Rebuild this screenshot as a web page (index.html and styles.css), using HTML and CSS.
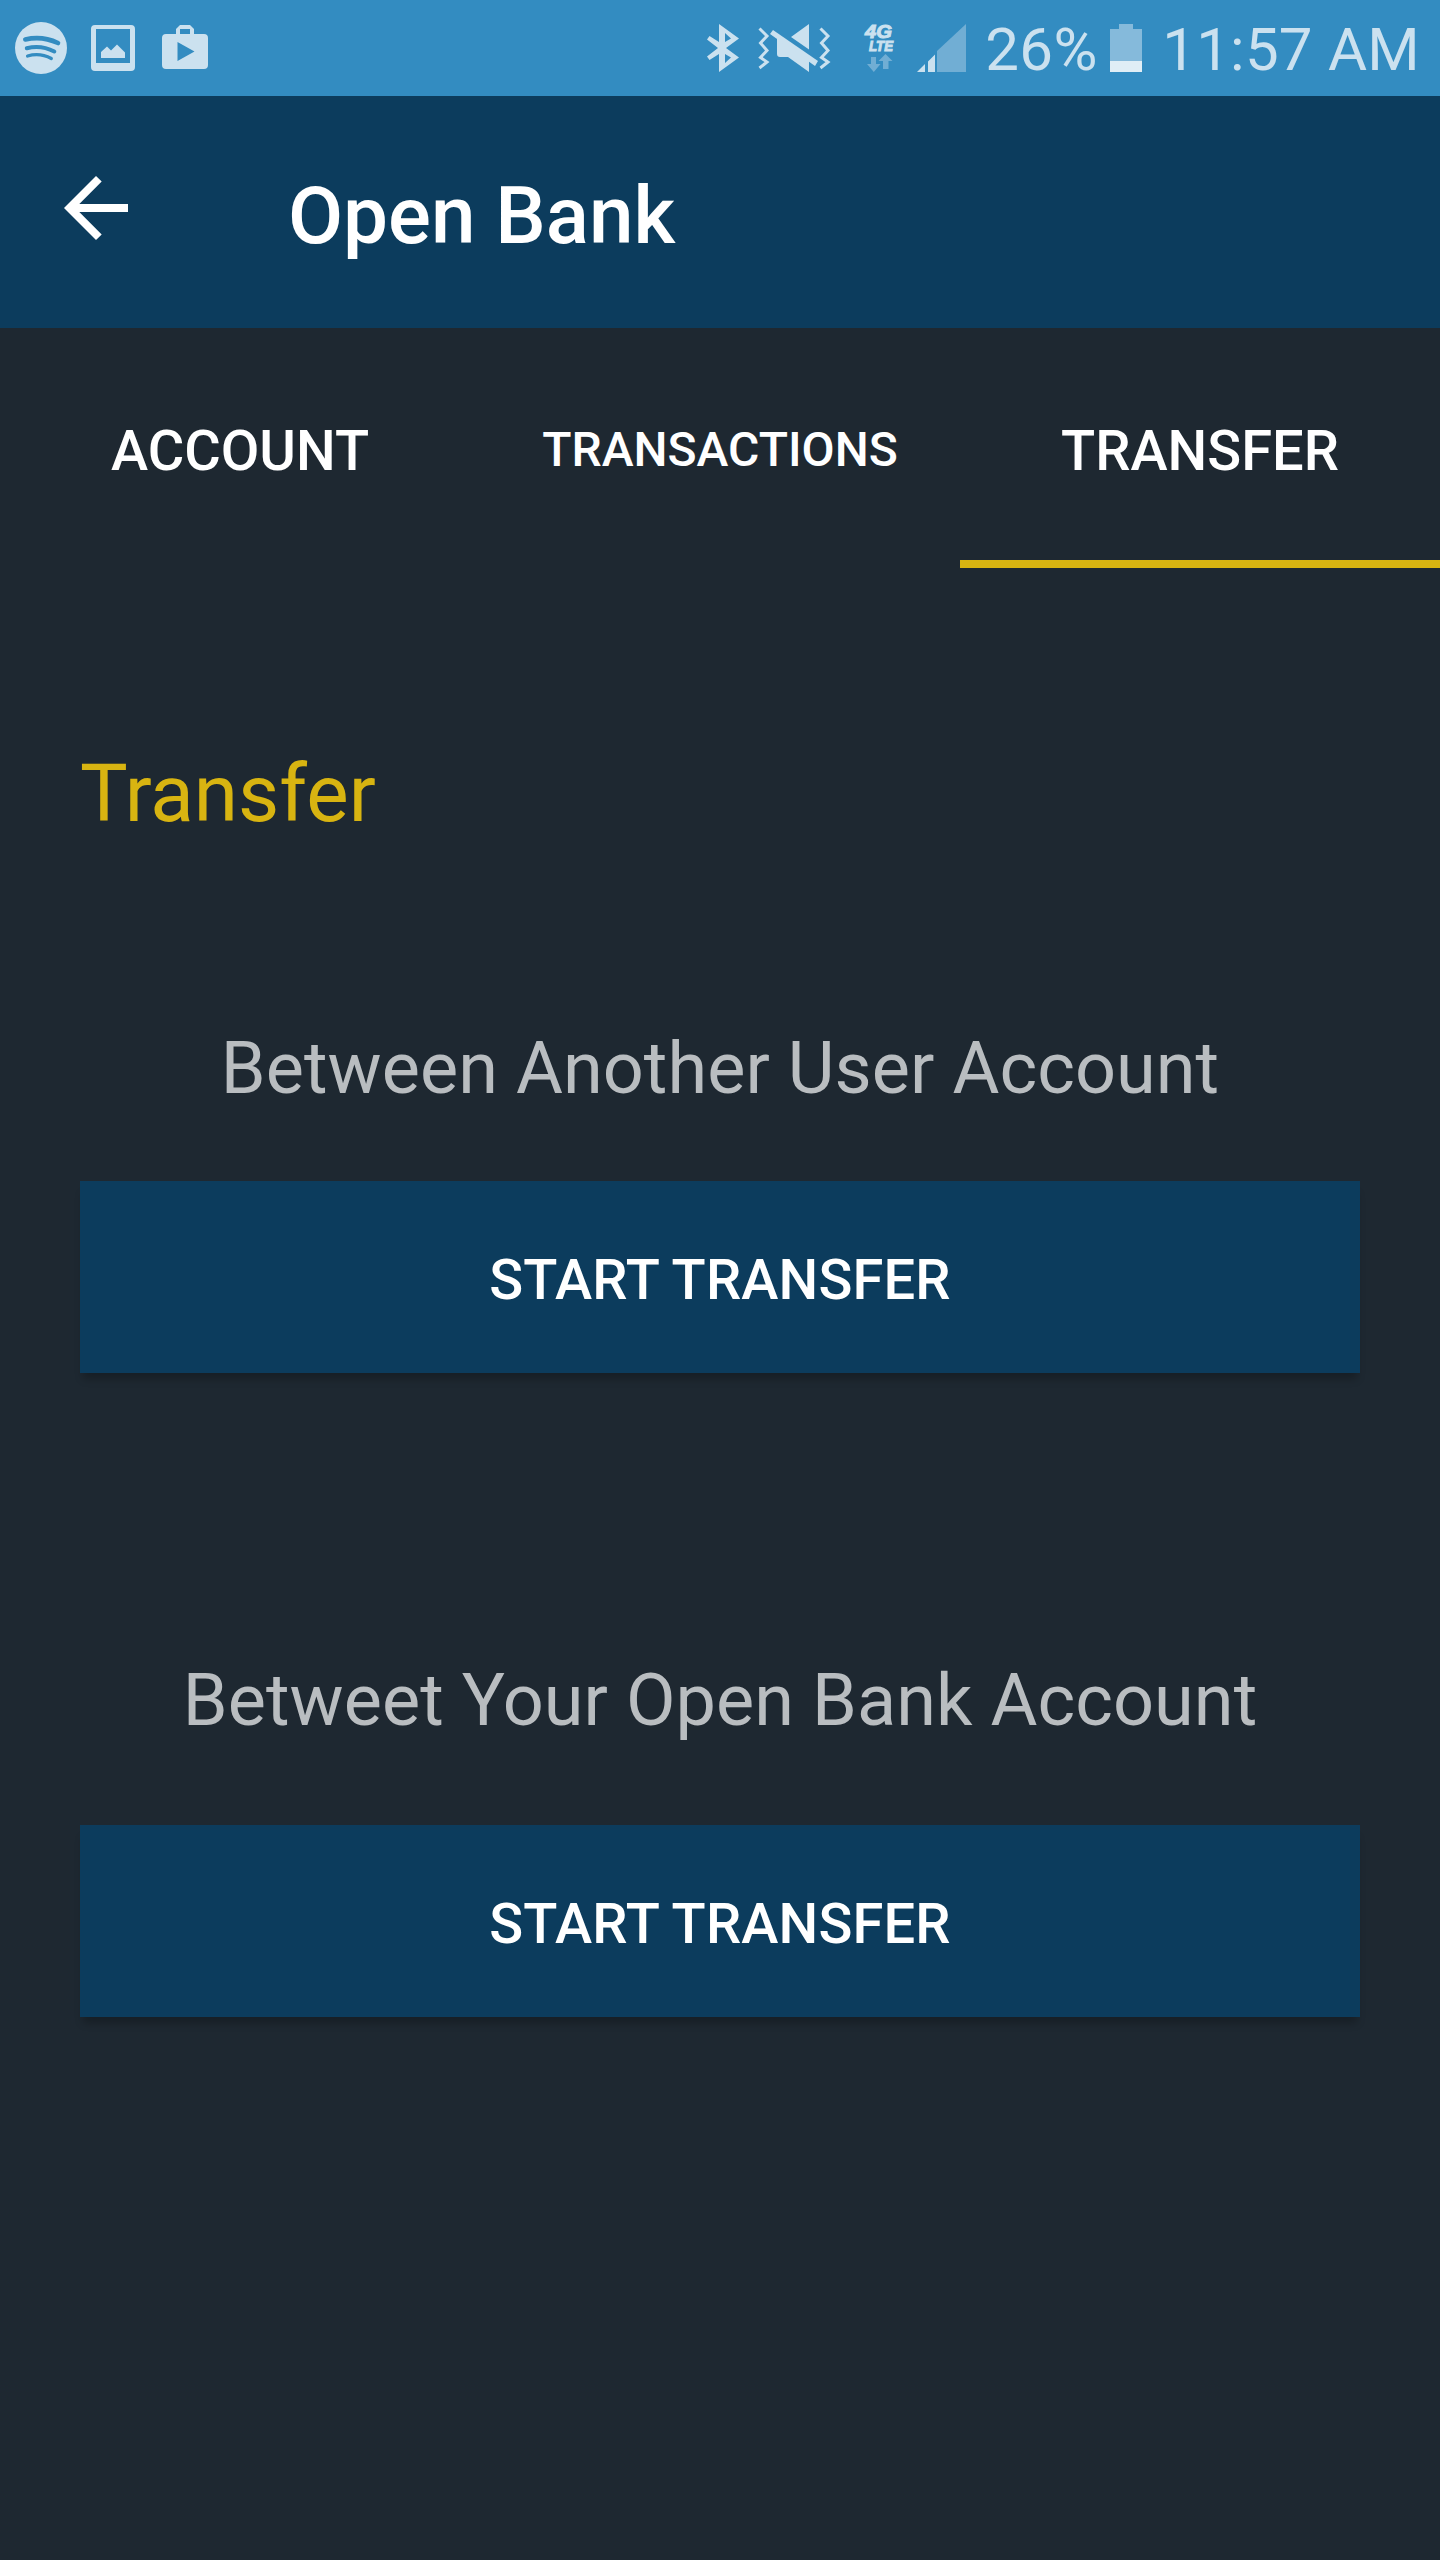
FILE: index.html
```html
<!DOCTYPE html>
<html lang="en">
<head>
<meta charset="utf-8">
<title>Open Bank</title>
<link rel="stylesheet" href="styles.css">
</head>
<body>
<div class="status">
  <svg class="notifications" width="240" height="96" viewBox="0 0 240 96">
    <circle cx="41" cy="48" r="26"/>
    <g class="cut" fill="none" stroke-linecap="round">
      <path d="M25.300 39.500Q42 35.500 58 43" stroke-width="4.600"/>
      <path d="M26.800 48.200Q41 44.500 54.300 51.500" stroke-width="4"/>
      <path d="M27.600 56Q40 52.500 51.300 58.500" stroke-width="3.300"/>
    </g>
    <path fill-rule="evenodd" d="M95 25H131Q135 25 135 29V67Q135 71 131 71H95Q91 71 91 67V29Q91 25 95 25ZM96 29V63H130V29Z"/>
    <path d="M101 58V52L107 46.500L111 50.500L117 44.500L125 52.500V58Z"/>
    <path fill-rule="evenodd" d="M176 34V29L180 25H190L194 29V34H204Q208 34 208 38V65Q208 69 204 69H166Q162 69 162 65V38Q162 34 166 34ZM180 29V34H190V29ZM177.500 42V61L194.500 51.500Z"/>
  </svg>
  <div class="system">
    <svg width="290" height="96" viewBox="690 0 290 96">
      <path fill-rule="evenodd" d="M719 24L739 38.500L726 48L739 57.500L719 72V54L709.500 60L707 56.500L718 48L707 39.500L709.500 36L719 42ZM725 33V42L731 38.500ZM725 54V63L731 57.500Z"/>
      <path class="line" d="M759.500 28.500L767 36L760.500 43L767 50.500L760.500 57.500L767 62L759.500 68M820.500 28.500L828 36L821.500 43L828 50.500L821.500 57.500L828 62L820.500 68"/>
      <path d="M809 24V49.500L791 37ZM777 36L809 58V72L788 57H780Q777 57 777 54Z"/>
      <path d="M773 30L818 61L815 66L770 34Z"/>
      <g class="net" font-size="19">
        <text x="865" y="38" textLength="27" lengthAdjust="spacingAndGlyphs">4G</text>
        <text x="869" y="50.700" font-size="14.500" textLength="24" lengthAdjust="spacingAndGlyphs">LTE</text>
      </g>
      <path class="dim" d="M871 57H876V64H880.500L873.800 72L867 64H871ZM883 69V61H878.500L885.500 54L892.500 61H888.500V69Z"/>
      <path class="dim" d="M937 51L966 24V72H937Z"/>
      <path d="M917 72L925 64V72ZM928 72V61.500L935 54.500V72Z"/>
    </svg>
    <span class="percent">26%</span>
    <svg class="battery" width="32" height="96" viewBox="0 0 32 96">
      <path fill="#85badb" d="M0 29H9V24H23V29H32V61H0Z"/>
      <path fill="#e0eef6" d="M0 61H32V72H0Z"/>
    </svg>
    <span class="clock">11:57 AM</span>
  </div>
</div>
<header class="appbar">
  <svg class="back" width="64" height="64" viewBox="0 0 64 64"><path d="M64 28H15.300L37.700 5.600L32 0L0 32L32 64L37.700 58.400L15.300 36H64Z"/></svg>
  <h1>Open Bank</h1>
</header>
<nav class="tabs">
  <a class="tab">ACCOUNT</a>
  <a class="tab small">TRANSACTIONS</a>
  <a class="tab active">TRANSFER</a>
</nav>
<main class="content">
  <h2>Transfer</h2>
  <section class="block">
    <p>Between Another User Account</p>
    <button>START TRANSFER</button>
  </section>
  <section class="block own">
    <p>Betweet Your Open Bank Account</p>
    <button>START TRANSFER</button>
  </section>
</main>
</body>
</html>
```
FILE: styles.css
```css
* { box-sizing: border-box; }
body {
  margin: 0;
  min-height: 2560px;
  background: #1e2831;
  color: #fff;
  font-family: Roboto, "Liberation Sans", sans-serif;
}
svg { display: block; flex: none; }
h1, h2, p { margin: 0; }

.status {
  display: flex;
  justify-content: space-between;
  height: 96px;
  padding-right: 20px;
  background: #338cc1;
  color: #cbe1ef;
  fill: #cbe1ef;
  font-size: 60px;
  line-height: 100px;
  white-space: nowrap;
}
.system { display: flex; }
.percent { width: 110px; margin-left: 5px; letter-spacing: .4px; }
.clock { letter-spacing: .25px; }
.battery { margin: 0 20px 0 15px; }
.cut { stroke: #338cc1; }
.line { fill: none; stroke: #cbe1ef; stroke-width: 3; }
.dim { fill: #71aed4; }
.net { font-family: "Liberation Sans", sans-serif; font-weight: bold; font-style: italic; letter-spacing: 0; stroke: #cbe1ef; stroke-width: 1; }

.appbar {
  display: flex;
  height: 232px;
  padding: 80px 64px 0;
  background: #0c3c5d;
}
.back { fill: #fff; }
.appbar h1 {
  margin-left: 160px;
  font-size: 80px;
  font-weight: 500;
  line-height: 80px;
}

.tabs { display: grid; grid-template: 240px / repeat(3, 1fr); }
.tab {
  border-bottom: 8px solid transparent;
  font-size: 56px;
  font-weight: 500;
  line-height: 246px;
  text-align: center;
}
.tab.small { font-size: 48px; line-height: 244px; }
.tab.active { border-color: #d8b411; }

.content { padding: 176px 80px 0; }
h2 { color: #d8b411; font-size: 80px; font-weight: 400; line-height: 100px; }
.block { margin-top: 175px; text-align: center; }
.block p { height: 162px; color: #b9bdc0; font-size: 72px; line-height: 100px; letter-spacing: .06px; }
.block.own { margin-top: 278px; }
.block.own p { height: 174px; }
button {
  display: block;
  width: 100%;
  height: 192px;
  padding: 6px 0 0;
  border: 0;
  background: #0c3c5d;
  box-shadow: 0 9px 8px -3px rgba(0, 0, 0, .24);
  color: #fff;
  font: 500 56px Roboto, "Liberation Sans", sans-serif;
  letter-spacing: .15px;
}
```
